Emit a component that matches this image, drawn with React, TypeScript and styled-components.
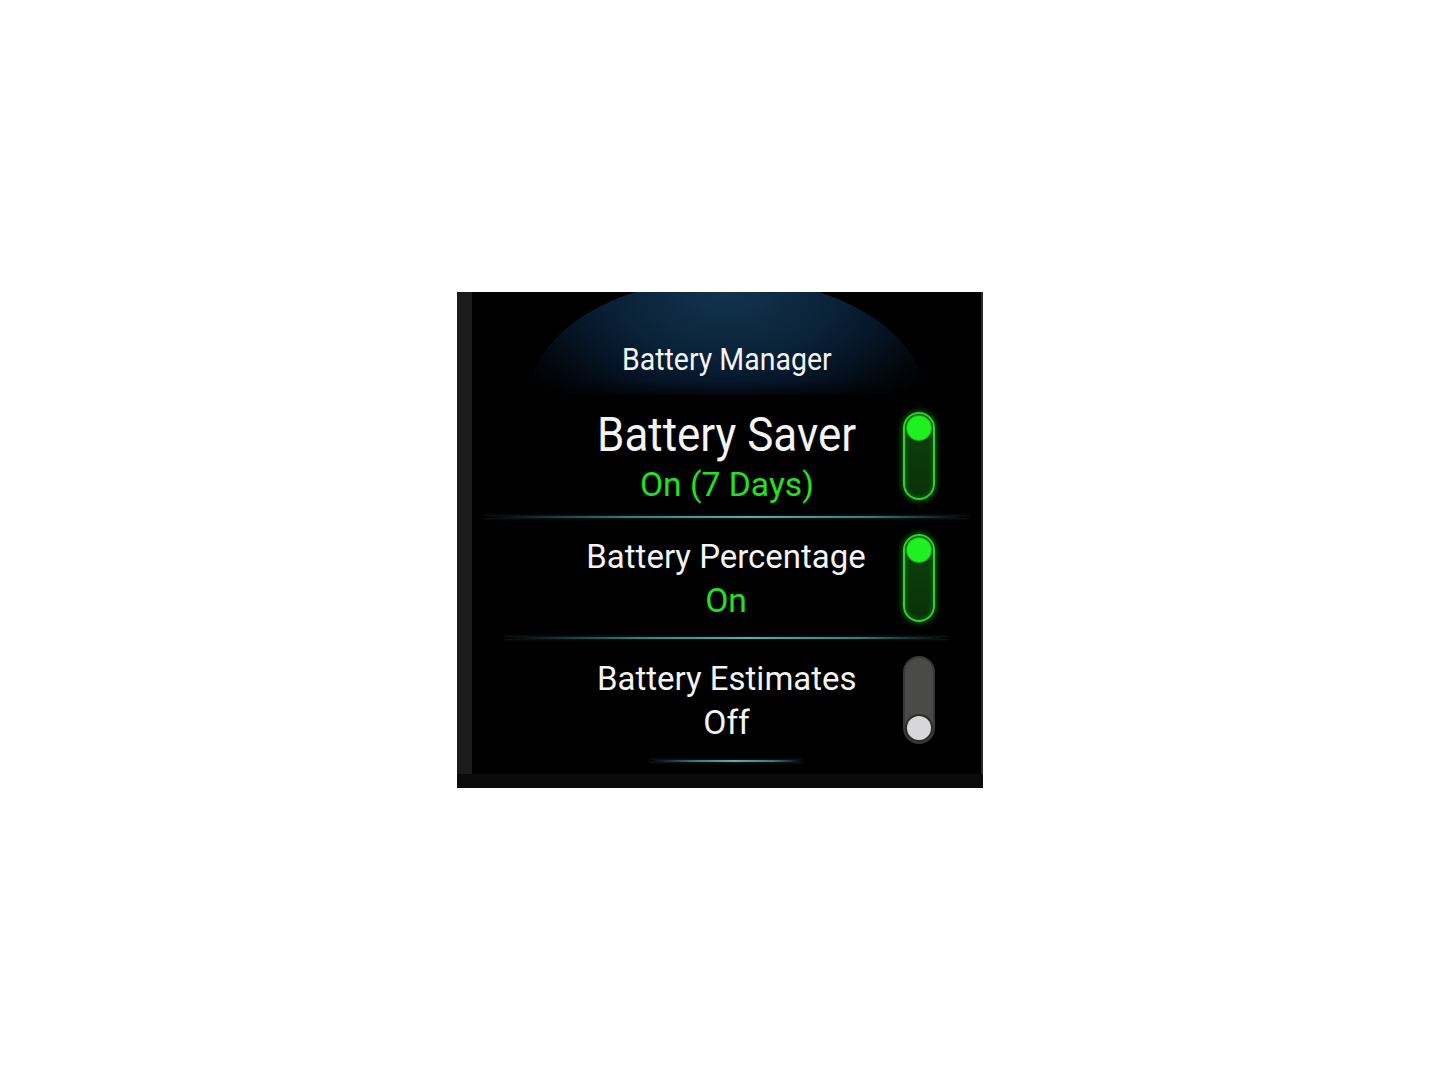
import React from 'react';
import styled, { createGlobalStyle } from 'styled-components';

const GREEN = '#22e022';
const WHITE = '#f4f4f4';

const GlobalStyle = createGlobalStyle`
  html, body {
    margin: 0;
    padding: 0;
    background: #ffffff;
  }
  body {
    font-family: Roboto, "Noto Sans", sans-serif;
  }
`;

const Page = styled.div`
  min-height: 100vh;
  display: flex;
  align-items: center;
  justify-content: center;
`;

const Frame = styled.div`
  width: 526px;
  height: 496px;
  display: flex;
  flex-direction: column;
  background: #0c0c0c;
`;

const Body = styled.div`
  display: flex;
  height: 482px;
`;

const SideBar = styled.div`
  width: 15px;
  background: #1b1b1b;
`;

const Screen = styled.div`
  flex: 1;
  display: flex;
  flex-direction: column;
  background: #000;
  border-right: 2px solid #2a2a2a;
  overflow: hidden;
`;

const BottomBar = styled.div`
  flex: 1;
  background: #0b0b0b;
`;

const Header = styled.div`
  position: relative;
  height: 103px;
  display: flex;
  align-items: flex-end;
  justify-content: center;
  padding-bottom: 20px;
  box-sizing: border-box;
  overflow: hidden;
  &::before {
    content: '';
    position: absolute;
    left: 50%;
    top: -14px;
    width: 400px;
    height: 250px;
    margin-left: -200px;
    border-radius: 50%;
    background: radial-gradient(ellipse 62% 58% at 50% 6%, #12344f 0%, #0b2339 42%, #06172a 62%, #030a12 82%, #000 100%);
  }
  &::after {
    content: '';
    position: absolute;
    left: 0;
    right: 0;
    bottom: 0;
    height: 14px;
    background: linear-gradient(180deg, rgba(0, 0, 0, 0) 0%, rgba(0, 0, 0, 0.55) 100%);
  }
`;

const Squeezed = styled.span<{ $size: number; $scale: number; $color?: string }>`
  position: relative;
  z-index: 1;
  display: inline-block;
  font-size: ${(p) => p.$size}px;
  line-height: 1;
  color: ${(p) => p.$color || WHITE};
  transform: scaleX(${(p) => p.$scale});
  white-space: nowrap;
`;

const Row = styled.div<{ $height: number }>`
  height: ${(p) => p.$height}px;
  display: grid;
  grid-template-columns: 1fr auto 1fr;
  align-items: center;
`;

const Texts = styled.div<{ $gap: number }>`
  grid-column: 2;
  display: flex;
  flex-direction: column;
  align-items: center;
  gap: ${(p) => p.$gap}px;
`;

const ToggleCell = styled.div`
  grid-column: 3;
  justify-self: end;
  margin-right: 46px;
  display: flex;
`;

const Track = styled.div<{ $on: boolean }>`
  width: 32px;
  height: 88px;
  box-sizing: border-box;
  border-radius: 16px;
  display: flex;
  flex-direction: column;
  justify-content: ${(p) => (p.$on ? 'flex-start' : 'flex-end')};
  align-items: center;
  padding: 2px;
  border: 2px solid ${(p) => (p.$on ? '#2bd42b' : '#383838')};
  background: ${(p) =>
    p.$on ? 'linear-gradient(180deg, #0d420d 0%, #0a300a 100%)' : '#4a4a49'};
  box-shadow: ${(p) =>
    p.$on ? '0 0 7px rgba(40, 230, 40, 0.6), inset 0 0 5px rgba(40, 230, 40, 0.4)' : 'none'};
`;

const Knob = styled.div<{ $on: boolean }>`
  width: 24px;
  height: 24px;
  border-radius: 50%;
  background: ${(p) => (p.$on ? '#1ff01f' : '#d7d7d9')};
  box-shadow: ${(p) => (p.$on ? '0 0 0 1px #17aa17' : '0 0 0 2px #2c2c2c')};
`;

const Separator = styled.div<{ $inset: number }>`
  height: 2px;
  margin: 0 ${(p) => p.$inset}px;
  background: linear-gradient(90deg, rgba(80, 150, 150, 0) 0%, #3f7a7a 30%, #6aa8a6 55%, #3f7a7a 80%, rgba(80, 150, 150, 0) 100%);
  box-shadow: 0 0 3px rgba(90, 170, 170, 0.35);
`;

const Toggle = ({ on }: { on: boolean }) => (
  <Track $on={on}>
    <Knob $on={on} />
  </Track>
);

interface Setting {
  label: string;
  status: string;
  on: boolean;
  labelSize: number;
  labelScale: number;
  gap: number;
  height: number;
  sepInset: number;
}

const settings: Setting[] = [
  { label: 'Battery Saver', status: 'On (7 Days)', on: true, labelSize: 48, labelScale: 0.915, gap: 8, height: 121, sepInset: 13 },
  { label: 'Battery Percentage', status: 'On', on: true, labelSize: 34, labelScale: 0.97, gap: 10, height: 119, sepInset: 33 },
  { label: 'Battery Estimates', status: 'Off', on: false, labelSize: 34, labelScale: 0.97, gap: 10, height: 121, sepInset: 178 },
];

export default function App() {
  return (
    <>
      <GlobalStyle />
      <Page>
        <Frame>
          <Body>
            <SideBar />
            <Screen>
              <Header>
                <Squeezed $size={32} $scale={0.89}>
                  Battery Manager
                </Squeezed>
              </Header>
              {settings.map((s) => (
                <React.Fragment key={s.label}>
                  <Row $height={s.height}>
                    <Texts $gap={s.gap}>
                      <Squeezed $size={s.labelSize} $scale={s.labelScale}>
                        {s.label}
                      </Squeezed>
                      <Squeezed $size={34} $scale={0.99} $color={s.on ? GREEN : WHITE}>
                        {s.status}
                      </Squeezed>
                    </Texts>
                    <ToggleCell>
                      <Toggle on={s.on} />
                    </ToggleCell>
                  </Row>
                  <Separator $inset={s.sepInset} />
                </React.Fragment>
              ))}
            </Screen>
          </Body>
          <BottomBar />
        </Frame>
      </Page>
    </>
  );
}
